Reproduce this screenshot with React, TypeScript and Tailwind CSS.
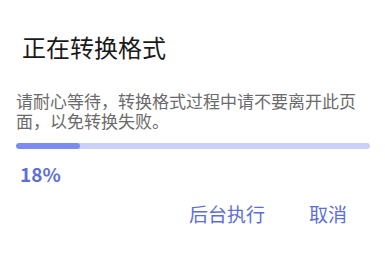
const cjk = { fontFamily: '"Noto Sans CJK SC", "Noto Sans", sans-serif' };

export default function App() {
  const progress = 18;

  return (
    <div className="h-[258px] w-[385px] bg-white" style={cjk}>
      <div className="px-[16px] pt-[30px]">
        <h1 className="pl-[6px] text-[24px] leading-[34px] text-[#1a1a1a]">正在转换格式</h1>
        <p className="mt-[27px] text-[17px] leading-[20px] text-[#6b6b6b]">
          请耐心等待，转换格式过程中请不要离开此页面，以免转换失败。
        </p>
        <div className="mt-[12px] h-[6px] w-[354px] overflow-hidden rounded-full bg-[#c9d0fc]">
          <div className="h-full rounded-full bg-[#7a8cf2]" style={{ width: `${progress}%` }} />
        </div>
        <div className="mt-[13px] pl-[4px] text-[19px] font-bold leading-[24px] text-[#5c6fd8]">{progress}%</div>
        <div className="mt-[15px] flex justify-end gap-[44px] pr-[22px] text-[19px] leading-[26px] text-[#5c6fd8]">
          <button>后台执行</button>
          <button>取消</button>
        </div>
      </div>
    </div>
  );
}
